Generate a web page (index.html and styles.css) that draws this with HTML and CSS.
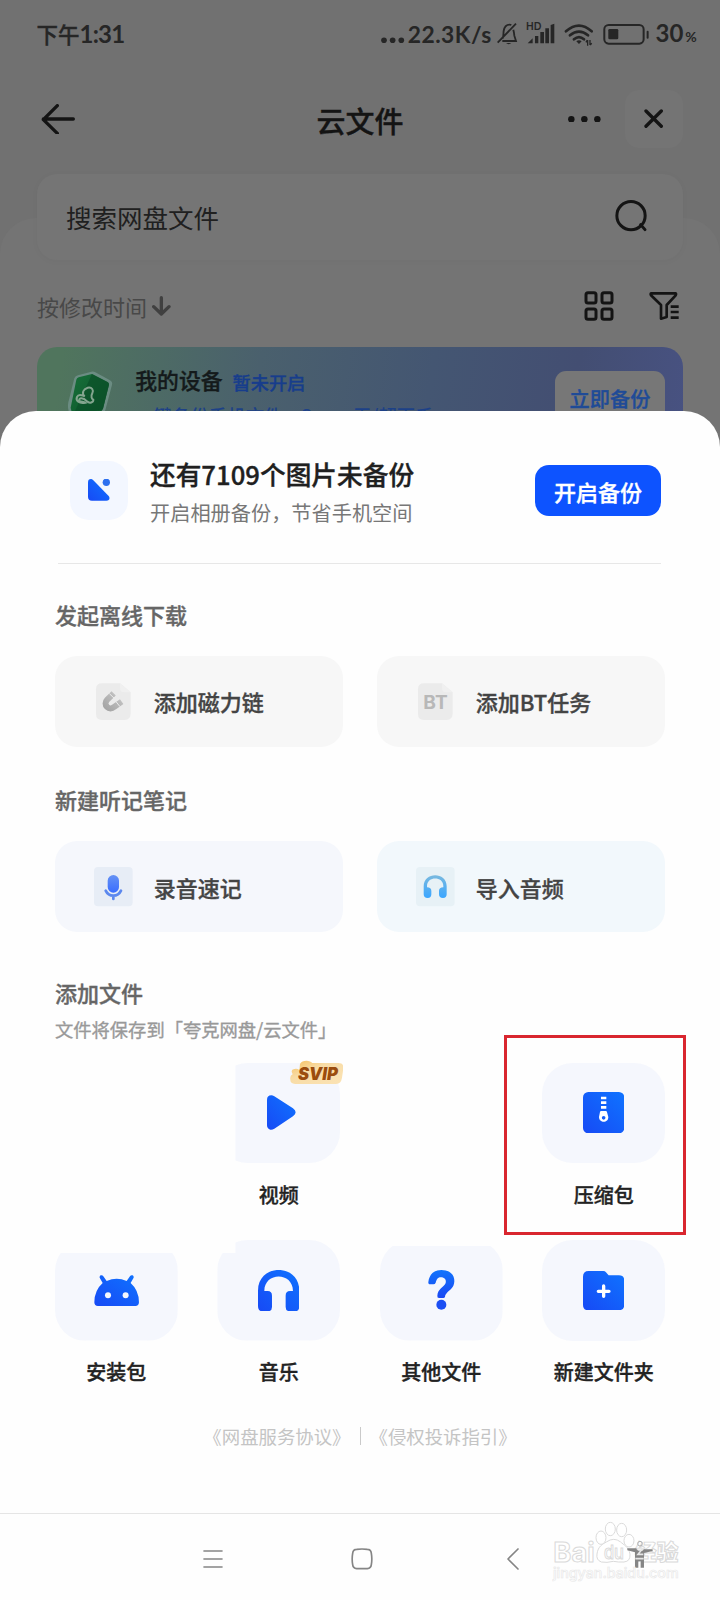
FILE: index.html
```html
<!DOCTYPE html>
<html lang="zh-CN">
<head>
<meta charset="utf-8">
<title>云文件</title>
<link rel="stylesheet" href="styles.css">
</head>
<body>
<svg class="defs" width="0" height="0" aria-hidden="true">
  <defs>
    <linearGradient id="blue" x1="1" y1="0" x2="0" y2="1"><stop offset="0" stop-color="#0f73ff"/><stop offset="1" stop-color="#174af5"/></linearGradient>
    <linearGradient id="blueDown" x1="0" y1="0" x2="0" y2="1"><stop offset="0" stop-color="#1274fc"/><stop offset="1" stop-color="#1a48f3"/></linearGradient>
    <linearGradient id="mic" x1="0" y1="0" x2="0" y2="1"><stop offset="0" stop-color="#6592f4"/><stop offset="1" stop-color="#3a6dff"/></linearGradient>
    <linearGradient id="sky" x1="0" y1="0" x2="0" y2="1"><stop offset="0" stop-color="#79b9df"/><stop offset="1" stop-color="#3ba6ff"/></linearGradient>
    <linearGradient id="gray" x1="1" y1="0" x2="0" y2="1"><stop offset="0" stop-color="#c9c9c9"/><stop offset="1" stop-color="#a5a5a5"/></linearGradient>
    <linearGradient id="gold" x1="0" y1="0" x2="1" y2="1"><stop offset="0" stop-color="#f6bf5b"/><stop offset=".4" stop-color="#f8dca6"/><stop offset="1" stop-color="#fbe3b5"/></linearGradient>
    <linearGradient id="shield" x1="0" y1="0" x2="1" y2="1"><stop offset="0" stop-color="#17703a"/><stop offset="1" stop-color="#0c5228"/></linearGradient>
  </defs>
</svg>
<div class="phone">
  <div class="backdrop">
    <header class="status">
      <span class="clock">下午<b>1:31</b></span>
      <svg class="dots" viewBox="0 0 70 20" width="23.3" height="6.7" fill="#262626"><circle cx="9" cy="10" r="8.5"/><circle cx="35" cy="10" r="8.5"/><circle cx="61" cy="10" r="8.5"/></svg>
      <span class="net">22.3K/s</span>
      <svg class="status-icons" viewBox="0 0 460 80" width="153.3" height="26.7" fill="none" stroke="#262626" stroke-width="4">
        <path d="M2 65 57 8M17 52C20 46 19 36 20 30C22 17 29 11 38 11Q41 11 43 12M49 26Q51 33 52 44L57 60H16" stroke-width="5.5"/>
        <path d="M27 66H43Q35 73 27 66Z" fill="#262626" stroke="none"/>
        <text x="87" y="28" font-size="31" textLength="46" lengthAdjust="spacingAndGlyphs" fill="#262626" stroke="none" font-weight="700" font-family="Lato, sans-serif">HD</text>
        <path d="M92 67 107 52V67ZM114 45H124V67H114ZM130 33H141V67H130ZM145 22H156V67H145ZM161 12 172 8V67H161Z" fill="#262626" stroke="none"/>
        <path d="M207 31Q246-3 284 31M219 43Q246 20 273 43M231 55Q246 42 261 55" stroke-width="8" stroke-linecap="round"/>
        <path d="M238 61Q246 54 254 61L246 69Z" fill="#262626" stroke="none"/>
        <path d="M272 57V74M271 57 267 64M279 72V57M280 72 284 66" stroke-width="4"/>
        <rect x="322" y="12" width="118" height="56" rx="13" stroke-width="6"/>
        <rect x="334" y="24" width="30" height="31" rx="4" fill="#262626" stroke="none"/>
        <path d="M452 32V50" stroke-width="6" stroke-linecap="round"/>
      </svg>
      <span class="percent">30<small>%</small></span>
    </header>

    <div class="titlebar">
      <svg viewBox="0 0 102 90" width="34" height="30" fill="none" stroke="#141414" stroke-width="10" stroke-linecap="round" stroke-linejoin="round"><path d="M49 5 7 47 49 88M7 45H97"/></svg>
      <h1>云文件</h1>
      <div class="title-actions">
        <svg viewBox="0 0 98 20" width="32.7" height="6.7" fill="#141414"><circle cx="10" cy="10" r="9.7"/><circle cx="49" cy="10" r="9.7"/><circle cx="88" cy="10" r="9.7"/></svg>
        <button class="close"><svg viewBox="0 0 58 58" width="19.3" height="19.3" stroke="#141414" stroke-width="10" stroke-linecap="round"><path d="M6 6 52 52M52 6 6 52"/></svg></button>
      </div>
    </div>

    <div class="search">
      <span>搜索网盘文件</span>
      <svg viewBox="0 0 98 100" width="32.7" height="33.3" fill="none" stroke="#141414" stroke-width="9"><circle cx="48" cy="50" r="42.5"/><path d="M77 77 90 92" stroke-linecap="round"/></svg>
    </div>

    <section class="panel">
      <div class="sort">
        <span>按修改时间</span>
        <svg class="arrow" viewBox="0 0 56 60" width="18.7" height="20" fill="none" stroke="#404040" stroke-width="10" stroke-linecap="round" stroke-linejoin="round"><path d="M28 5V52M5 32 28 54 51 32"/></svg>
        <svg class="grid-icon" viewBox="0 0 90 90" width="30" height="30" fill="none" stroke="#141414" stroke-width="9"><rect x="6" y="5" width="30" height="31" rx="6"/><rect x="54" y="5" width="30" height="31" rx="6"/><rect x="6" y="54" width="30" height="31" rx="6"/><rect x="54" y="54" width="30" height="31" rx="6"/></svg>
        <svg viewBox="0 0 92 90" width="30.7" height="30" fill="none" stroke="#141414" stroke-width="8" stroke-linejoin="round"><path d="M6 7H80Q82 10 80 13L53 42V78L36 83V42L6 13Q4 10 6 7ZM65 47H89M65 63H89M65 80H89"/></svg>
      </div>
      <div class="banner">
        <svg class="shield" viewBox="0 0 145 150" width="48.3" height="50">
          <path d="M8 120Q3 102 9 86L25 22Q28 14 36 13L76 2Q82 0 88 4L132 28Q141 33 138 42L118 118Q112 132 100 140Z" fill="#6b8c82"/>
          <path d="M14 110 31 26Q32 21 38 19L78 9L126 34Q130 37 129 42L111 114Q107 122 98 128L20 136Z" fill="url(#shield)"/>
          <path d="M78 9 126 34Q130 37 129 42L111 114L20 136Z" fill="#0a4f28" opacity=".65"/>
          <path d="M58 95C40 99 28 89 33 78C38 67 48 73 56 76C46 66 52 54 65 50C78 47 84 58 79 67C74 76 77 84 82 86C83 94 71 99 63 91C51 78 38 81 40 88C42 94 53 91 58 95Z" fill="none" stroke="#84a58f" stroke-width="6"/>
        </svg>
        <div class="banner-text">
          <div class="banner-line"><strong>我的设备</strong><em>暂未开启</em></div>
          <div class="banner-sub">一键备份手机文件，Super无/超百千</div>
        </div>
        <button class="backup-now">立即备份</button>
      </div>
    </section>
  </div>

  <main class="sheet">
    <section class="promo">
      <div class="promo-icon"><svg viewBox="0 0 66 66" width="22" height="22"><path d="M0 10Q0 0 9 0Q12 0 16 4L62 51Q67 58 62 63Q60 65 55 65H12Q0 65 0 54Z" fill="url(#blue)"/><circle cx="55" cy="10" r="11" fill="#2d70ef"/></svg></div>
      <div class="promo-text"><h2>还有7109个图片未备份</h2><p>开启相册备份，节省手机空间</p></div>
      <button class="primary">开启备份</button>
    </section>

    <h3>发起离线下载</h3>
    <div class="cards">
      <div class="card neutral">
        <svg viewBox="0 0 116 118" width="38.7" height="39.3"><path d="M6 22Q6 4 24 4H78L110 31V94Q110 114 92 114H24Q6 114 6 96Z" fill="#ebebeb"/><path d="M78 4 110 31H90Q78 31 78 18Z" fill="#f0f0f0"/><path d="M59 34 39 54A14.8 14.8 0 0 0 60 75L83 59" fill="none" stroke="url(#gray)" stroke-width="18"/><path d="M46 35 62 50M66 59 78 74" stroke="#ebebeb" stroke-width="3"/></svg>
        <span>添加磁力链</span>
      </div>
      <div class="card neutral">
        <svg viewBox="0 0 116 118" width="38.7" height="39.3"><path d="M6 22Q6 4 24 4H78L110 31V94Q110 114 92 114H24Q6 114 6 96Z" fill="#ebebeb"/><path d="M78 4 110 31H90Q78 31 78 18Z" fill="#f0f0f0"/><text x="22" y="80" font-size="57" textLength="73" lengthAdjust="spacingAndGlyphs" font-family="Inter, sans-serif" font-weight="700" fill="#b8b8b8">BT</text></svg>
        <span>添加BT任务</span>
      </div>
    </div>

    <h3 class="second">新建听记笔记</h3>
    <div class="cards">
      <div class="card lilac">
        <svg viewBox="0 0 116 118" width="38.7" height="39.3"><rect width="116" height="118" rx="12" fill="#e7edf6"/><rect x="41" y="24" width="34" height="53" rx="17" fill="url(#mic)"/><path d="M35 71Q42 86 58 86T81 71M58 87V96" fill="none" stroke="#5c88ee" stroke-width="8" stroke-linecap="round"/></svg>
        <span>录音速记</span>
      </div>
      <div class="card ice">
        <svg viewBox="0 0 116 118" width="38.7" height="39.3"><rect width="116" height="118" rx="12" fill="#e7f1f6"/><path d="M23 58C23 14 92 14 92 58V82Q92 93 81 93Q69 93 69 82V72Q69 61 82 61V57C82 27 33 27 33 57V61Q46 61 46 72V82Q46 93 35 93Q23 93 23 82Z" fill="url(#sky)"/></svg>
        <span>导入音频</span>
      </div>
    </div>

    <h3 class="third">添加文件</h3>
    <p class="hint">文件将保存到「夸克网盘/云文件」</p>

    <div class="tiles">
      <div class="tile video">
        <div class="face"><svg viewBox="0 0 88 106" width="29.3" height="35.3"><path d="M0 15Q0 1 13 1Q17 1 22 4L78 40Q86 46 86 52T78 64L22 101Q16 105 10 104Q0 101 0 91Z" fill="url(#blue)"/></svg></div>
        <svg class="svip" viewBox="0 0 160 74" width="53.3" height="24.7"><path d="M30 12C36-2 62 0 67 9H145Q162 9 160 26L156 54Q153 72 138 72H16Q0 72 1 58Q-1 47 8 43Q0 29 13 27Q22 25 28 30Z" fill="url(#gold)"/><text x="24" y="59" font-size="51" textLength="120" lengthAdjust="spacingAndGlyphs" font-family="Inter, sans-serif" font-style="italic" font-weight="900" fill="#9b4c0d">SVIP</text></svg>
        <span>视频</span>
      </div>
      <div class="tile zip">
        <div class="face"><svg viewBox="0 0 124 124" width="41.3" height="41.3"><rect width="124" height="124" rx="16" fill="url(#blue)"/><path d="M54 14H70V22H54ZM54 28H70V36H54ZM54 42H70V50H54Z" fill="#fff"/><path fill-rule="evenodd" d="M54 57H69Q71 57 72 60L76 75C77 94 48 94 48 75L51 60Q52 57 54 57ZM62 72A5 5 0 1 0 62 83A5 5 0 1 0 62 72Z" fill="#fff"/></svg></div>
        <span>压缩包</span>
      </div>
      <div class="tile apk">
        <div class="face"><svg viewBox="0 0 136 94" width="45.3" height="31.3"><path d="M26 24 17 8Q16 3 20 1Q25-1 28 4L38 18Q68 5 98 18L108 4Q111-1 116 1Q120 3 119 8L110 24Q135 46 135 82Q135 93 124 93H12Q1 93 1 82Q1 46 26 24Z" fill="url(#blue)"/><circle cx="42" cy="61" r="9" fill="#f5f7fd"/><circle cx="95" cy="61" r="9" fill="#f5f7fd"/></svg></div>
        <span>安装包</span>
      </div>
      <div class="tile music">
        <div class="face"><svg viewBox="0 0 124 124" width="41.3" height="41.3"><path d="M0 62C0-21 124-21 124 62V108Q124 124 111 124H96Q83 124 83 111V77Q83 63 96 63H105C105 5 19 5 19 63H29Q42 63 42 77V111Q42 124 29 124H13Q0 124 0 108Z" fill="url(#blue)"/></svg></div>
        <span>音乐</span>
      </div>
      <div class="tile other">
        <div class="face"><svg viewBox="0 0 80 120" width="26.7" height="40"><path d="M1 36C4 13 18 0 40 0C65 0 80 14 79 34C78 54 66 59 57 68Q51 74 51 80Q50 84 46 84H33Q27 84 28 77C29 56 48 52 53 39C56 27 46 22 39 22C27 22 26 30 23 38Q21 43 16 43H7Q0 43 1 36Z" fill="url(#blueDown)"/><circle cx="40" cy="104" r="15" fill="#1c4ff3"/></svg></div>
        <span>其他文件</span>
      </div>
      <div class="tile folder">
        <div class="face"><svg viewBox="0 0 124 118" width="41.3" height="39.3"><path d="M17 0H61Q66 0 69 4L77 13H108Q124 13 124 29V101Q124 118 107 118H17Q0 118 0 101V17Q0 0 17 0Z" fill="url(#blue)"/><path d="M62 45V76M46 61H78" stroke="#fff" stroke-width="10" stroke-linecap="round"/></svg></div>
        <span>新建文件夹</span>
      </div>
    </div>

    <footer class="legal"><span>《网盘服务协议》</span><i></i><span>《侵权投诉指引》</span></footer>
  </main>

  <nav class="sysnav">
    <svg viewBox="0 0 60 60" width="20" height="20" stroke="#858585" stroke-width="5" stroke-linecap="round"><path d="M3 6H57M3 30H57M3 54H57"/></svg>
    <svg viewBox="0 0 66 66" width="22" height="22" fill="none" stroke="#858585" stroke-width="5"><path d="M17 4Q33 2 49 4Q60 4 61 16Q64 33 61 50Q60 61 49 62H17Q6 61 5 50Q2 33 5 16Q6 4 17 4Z"/></svg>
    <svg viewBox="0 0 36 66" width="12" height="22" fill="none" stroke="#858585" stroke-width="5" stroke-linecap="round" stroke-linejoin="round"><path d="M33 3 3 33 33 63"/></svg>
    <svg class="watermark" viewBox="0 0 400 200" width="133.3" height="66.7" fill="#fff" stroke="#dadada" stroke-width="3">
      <text x="4" y="126" font-size="82" textLength="124" lengthAdjust="spacingAndGlyphs" font-family="Inter, sans-serif" font-weight="700">Bai</text>
      <path d="M135 102C138 78 153 72 163 66Q186 50 206 66C214 74 230 80 234 102Q236 124 216 126Q200 127 184 124Q164 129 148 126Q132 120 135 102Z"/>
      <g><ellipse cx="147" cy="53" rx="15" ry="20"/><ellipse cx="175" cy="27" rx="15" ry="20"/><ellipse cx="209" cy="30" rx="15" ry="20"/><ellipse cx="231" cy="62" rx="15" ry="19"/></g>
      <text x="156" y="118" font-size="58" textLength="60" lengthAdjust="spacingAndGlyphs" font-family="Inter, sans-serif" font-weight="500">du</text>
      <text x="249" y="120" font-size="66" textLength="130" lengthAdjust="spacingAndGlyphs" font-family="Noto Sans CJK SC, sans-serif" font-weight="900">经验</text>
      <circle cx="264" cy="71" r="7" fill="none" stroke="#b0b0b0"/>
      <path d="M226 85H254L258 92H272L276 88H302V93L276 99V143H266V124H259V143H249V97L226 91Z" fill="#858585" stroke="none"/>
      <path d="M254 86H272L258 103H274M250 116H275" fill="none" stroke="#e6e6e6" stroke-width="5"/>
      <text x="3" y="175" font-size="44" textLength="377" lengthAdjust="spacingAndGlyphs" font-family="Inter, sans-serif" font-weight="500" stroke="#e8e8e8" stroke-width="2">jingyan.baidu.com</text>
    </svg>
  </nav>
</div>
</body>
</html>
```

FILE: styles.css
```css
* { box-sizing: border-box; margin: 0; padding: 0; }
body { background: #fefefe; font-family: "Noto Sans CJK SC", sans-serif; color: #222; }
svg { display: block; flex: none; }
.defs { position: absolute; }
button { border: 0; font: inherit; display: flex; align-items: center; justify-content: center; }
h1, h2, h3, strong, em { font-weight: 500; font-style: normal; }
h1, h2, h3, strong, em, .card span, .tile span, .hint, .primary, .backup-now, .clock { -webkit-text-stroke: .35px currentColor; }

.phone { width: 720px; height: 1600px; overflow: hidden; display: flex; flex-direction: column; }

/* Dimmed page behind the sheet */
.backdrop { height: 460px; flex: none; background: #717171; overflow: hidden; }
.status { height: 68px; padding: 0 22px 0 36.5px; display: flex; align-items: center; color: #262626; font-weight: 500; }
.clock { font-size: 21.5px; display: flex; align-items: center; line-height: 30px; }
.clock b { font: 700 24px/30px Lato, sans-serif; letter-spacing: -.8px; -webkit-text-stroke: 0; }
.dots { margin: 12px 3px 0 auto; }
.net { font: 700 22.8px/30px Lato, sans-serif; letter-spacing: .5px; }
.status-icons { margin-left: 5px; }
.percent { width: 48px; font: 700 24px/30px Lato, sans-serif; padding: 2px 0 0 5.5px; white-space: nowrap; }
.percent small { font-size: 14px; margin-left: 2px; }

.titlebar { height: 106px; padding: 0 37px 4px 41px; display: grid; grid-template-columns: 1fr auto 1fr; align-items: center; }
.titlebar h1 { font-size: 29px; line-height: 40px; color: #141414; padding: 2px 4px 0 0; }
.title-actions { display: flex; justify-content: flex-end; align-items: center; gap: 24.5px; }
.close { width: 58px; height: 58px; border-radius: 14px; background: #747474; }

.search { position: relative; z-index: 1; height: 86px; margin: 0 37px; padding: 0 35px 2px 29px; border-radius: 20px; background: #757575; box-shadow: 0 1px 7px rgba(0, 0, 0, .03); display: flex; align-items: center; justify-content: space-between; color: #202020; font-size: 25.5px; }
.panel { margin-top: -42px; padding: 42px 37px 0; border-radius: 36px 36px 0 0; background: #747474; }
.sort { height: 87px; padding: 5px 3px 0 0; display: flex; align-items: center; font-size: 22px; color: #484848; }
.sort span { margin-top: -1px; }
.arrow { margin-left: 5px; }
.grid-icon { margin-left: auto; margin-right: 35px; }
.banner { height: 130px; border-radius: 20px; background: linear-gradient(98deg, #50755d 4%, #4a606d 34%, #445672 60%, #434e72 82%, #485282); display: flex; align-items: flex-start; padding: 24px 18px 0 29px; }
.banner-text { margin: -8px 0 0 21px; flex: 1; }
.banner-line { display: flex; align-items: center; gap: 10px; height: 32px; }
.banner-line strong { font-size: 21.8px; color: #141a1b; padding-top: 1px; }
.banner-line em { font-size: 18.2px; padding-top: 6px; color: #173d8c; }
.banner-sub { font-size: 18.4px; line-height: 27px; margin: 7px 0 0; color: #1d4187; white-space: nowrap; font-weight: 500; }
.backup-now { width: 110px; height: 70px; border-radius: 11px; background: #777; color: #1f4b97; font-size: 20.2px; font-weight: 500; padding-bottom: 15px; }

/* Bottom sheet */
.sheet { position: relative; height: 1102px; margin-top: -49px; flex: none; background: #fefefe; border-radius: 36px 36px 0 0; padding: 0 55px; }
.promo { height: 153px; margin: 0 4px 0 3px; padding: 46px 0 0 11.5px; border-bottom: 1.5px solid #e7e7e7; display: flex; align-items: flex-start; }
.promo-icon { width: 58.5px; height: 58.5px; margin-top: 4px; border-radius: 19px; background: #f3f7ff; display: flex; align-items: center; justify-content: center; }
.promo-text { margin-left: 22px; margin-top: -2px; flex: 1; }
.promo h2 { font-size: 25.7px; line-height: 37px; color: #202020; white-space: nowrap; }
.promo p { font-size: 20.2px; line-height: 30px; margin-top: 6px; color: #777; white-space: nowrap; }
.primary { width: 126px; height: 51px; margin-top: 8px; border-radius: 14px; background: #0d53ff; color: #fff; font-size: 22px; font-weight: 500; padding-top: 1px; }

h3 { font-size: 22px; line-height: 32px; color: #666; margin-top: 34px; }
h3.second { margin-top: 36px; }
h3.third { margin-top: 44px; }
.cards { display: grid; grid-template-columns: 1fr 1fr; gap: 34px; margin-top: 25.5px; }
h3.second + .cards { margin-top: 26.5px; }
.card { height: 91px; border-radius: 22px; padding: 0 0 0 39px; display: flex; align-items: center; gap: 21px; font-size: 22px; font-weight: 500; color: #444; }
.card svg { margin-top: 1px; }
.neutral { background: #f7f7f7; }
.lilac { background: #f5f7fc; }
.ice { background: #f2f8fc; }
.hint { font-size: 18.3px; line-height: 27px; margin-top: 8px; color: #999; font-weight: 400; }

.tiles { display: grid; grid-template-columns: repeat(4, 122.7px); justify-content: space-between; grid-auto-rows: 177.5px; margin-top: 19.5px; }
.tile { position: relative; display: flex; flex-direction: column; align-items: center; font-size: 20px; font-weight: 500; color: #222; white-space: nowrap; }
.tile span { line-height: 30px; margin-top: 16.5px; }
.face { width: 100%; height: 100.5px; border-radius: 31px; background: #f5f7fd; display: flex; align-items: center; justify-content: center; }
.video { grid-column: 2; }
.video .face { clip-path: inset(0 0 0 18px); padding-left: 5px; }
.zip { grid-column: 4; }
.zip::after { content: ""; box-sizing: border-box; position: absolute; left: -38px; top: -27.5px; width: 182px; height: 200px; border: 3px solid #d9262f; }
.apk .face { clip-path: inset(13px 0 0 0); }
.music .face { clip-path: polygon(18px 0, 100% 0, 100% 100%, 0 100%, 0 13px, 18px 13px); }
.other .face { clip-path: inset(6px 0 0 0); }
.svip { position: absolute; right: -3px; top: -3px; }

.legal { display: flex; align-items: center; justify-content: center; margin-top: 4.5px; font-size: 18.4px; line-height: 28px; color: #c4c4c4; font-weight: 400; }
.legal i { width: 1px; height: 18px; margin: 0 9px; background: #cacaca; }

.sysnav { position: relative; height: 87px; border-top: 1px solid #e5e5e5; display: flex; align-items: center; padding: 3px 0 0 203px; background: #fefefe; }
.sysnav svg:nth-child(2) { margin-left: 128px; }
.sysnav svg:nth-child(3) { margin-left: 134px; }
.sysnav .watermark { position: absolute; left: 552px; top: 6px; }
```
